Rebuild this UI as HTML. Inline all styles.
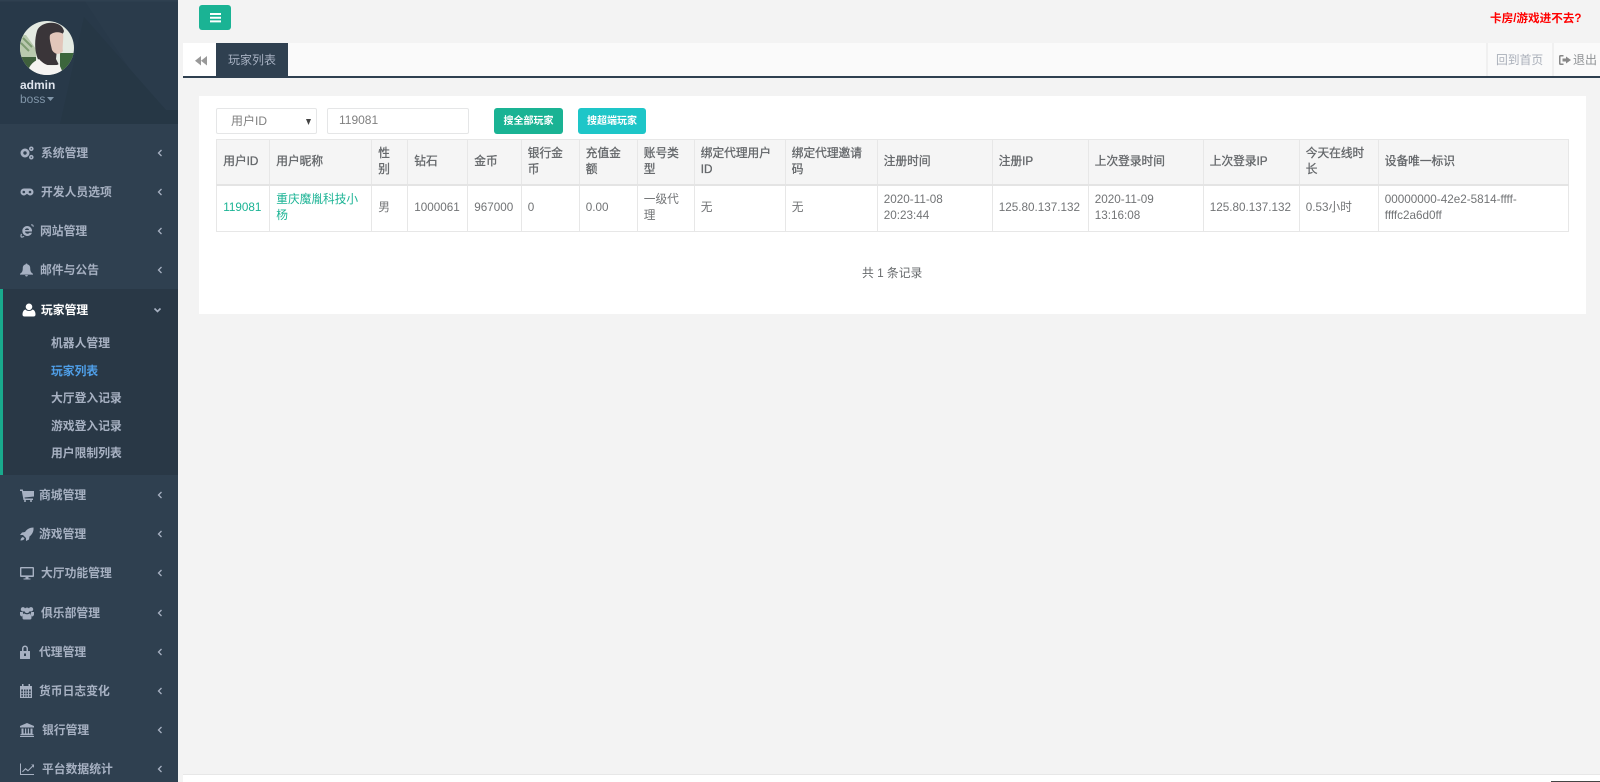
<!DOCTYPE html>
<html lang="zh"><head><meta charset="utf-8"><title>玩家列表</title>
<style>
*{box-sizing:border-box}
html,body{margin:0;padding:0;width:1600px;height:782px;overflow:hidden;background:#f3f3f3;font-family:"Liberation Sans","Noto Sans CJK SC",sans-serif;font-size:12px;color:#676a6c}
.a{position:absolute;white-space:nowrap}
#side{position:absolute;left:0;top:0;width:177.500px;height:782px;background:#2f4050;overflow:hidden}
#head{position:absolute;left:0;top:0;width:178px;height:124px;background:#283949}
.m{position:absolute;left:0;width:177px;height:20px;line-height:20px;color:#a7b1c2;font-weight:700;font-size:11.800px}
.m svg.i{position:absolute;left:20px;top:3px;width:14px;height:14px;fill:#a7b1c2}
.m span{position:absolute;top:0;white-space:nowrap}
.m svg.c{position:absolute;left:155px;top:5px;width:9px;height:10px;fill:none;stroke:#a7b1c2;stroke-width:1.300}
.s{position:absolute;left:51px;color:#a7b1c2;font-weight:700;line-height:18px;white-space:nowrap;font-size:11.800px}
table{position:absolute;left:216px;top:138.500px;width:1353px;height:92px;border-collapse:collapse;table-layout:fixed;font-size:11.700px;line-height:16px}
td,th{border:1px solid #e7e7e7;padding:0 0 0 6.300px;text-align:left;vertical-align:middle;white-space:nowrap;overflow:visible}
th{background:#f5f5f5;font-weight:400;color:#64676a;border-bottom:2px solid #e4e4e4;height:46px;-webkit-text-stroke:.3px #64676a}
td{height:46px;color:#727476}
td.g{color:#1ab394}
</style></head><body>
<div id="side">
<div id="head">
<svg width="178" height="124" style="position:absolute;left:0;top:0"><path d="M84 0H178V124H166Z" fill="#2a3b4b"/><path d="M84 17L166 110H178V124H60Z" fill="#263745"/><path d="M0 0H178V1.500H0Z" fill="#2f4050"/></svg>
<svg width="54" height="54" viewBox="0 0 54 54" style="position:absolute;left:20px;top:21px"><defs><clipPath id="av"><circle cx="27" cy="27" r="27"/></clipPath></defs><g clip-path="url(#av)"><rect width="54" height="54" fill="#e4eae2"/><path d="M0 14L6 14L16 28V36H0Z" fill="#b9c9ae"/><path d="M3 17L12 26M1 22L9 30" stroke="#7e9c72" stroke-width="2"/><path d="M40 32H54V50H40Z" fill="#3c663c"/><path d="M0 36H16V54H0Z" fill="#3f5f3c"/><path d="M17 10C20 0 41-2 44 10C43 14 40 14 38 18L36 38L39 44L22 44C14 36 14 20 17 10Z" fill="#3a3539"/><path d="M30 14C34 10 41 11 43 13C44 16 42 26 43 30C40 34 35 34 32 29C31 24 29 18 30 14Z" fill="#e2c6ba"/><path d="M7 54C8 46 12 41 19 38C24 44 32 47 39 43L44 54Z" fill="#f5f3f1"/></g></svg>
<div class="a" style="left:20px;top:77px;color:#dfe4ed;font-weight:700;font-size:12px;line-height:16px">admin</div>
<div class="a" style="left:20px;top:91px;color:#8095a8;font-size:12px;line-height:16px">boss</div>
<svg class="a" style="left:47px;top:97px" width="7" height="4"><path d="M0 0H7L3.500 4Z" fill="#8095a8"/></svg>
</div>
<div style="position:absolute;left:0;top:289px;width:178px;height:186px;background:#293846"></div>
<div style="position:absolute;left:0;top:289px;width:3px;height:186px;background:#19aa8d"></div>

<div class="m" style="top:143px"><svg class="i" viewBox="0 0 14 14"><path fill-rule="evenodd" d="M5 2.500a4.500 4.500 0 1 1 0 9a4.500 4.500 0 0 1 0-9ZM5 5.300a1.700 1.700 0 1 0 0 3.400a1.700 1.700 0 0 0 0-3.400Z"/><path fill-rule="evenodd" d="M11.300 .5a2.300 2.300 0 1 1 0 4.600a2.300 2.300 0 0 1 0-4.600ZM11.300 2.100a.7.7 0 1 0 0 1.400a.7.7 0 0 0 0-1.400ZM11.300 8.900a2.300 2.300 0 1 1 0 4.600a2.300 2.300 0 0 1 0-4.600ZM11.300 10.500a.7.7 0 1 0 0 1.400a.7.7 0 0 0 0-1.400Z"/></svg><span style="left:41px">系统管理</span><svg class="c" viewBox="0 0 9 10"><path d="M6.500 2L3.500 5L6.500 8"/></svg></div>
<div class="m" style="top:182px"><svg class="i" viewBox="0 0 14 14"><path fill-rule="evenodd" d="M4 3.500H10A3.500 3.500 0 0 1 10 10.500C8.500 10.500 8 9 7 9S5.500 10.500 4 10.500A3.500 3.500 0 0 1 4 3.500ZM3.800 5.700a1.300 1.300 0 1 0 0 2.600a1.300 1.300 0 0 0 0-2.600ZM10 5.700a1.300 1.300 0 1 0 0 2.600a1.300 1.300 0 0 0 0-2.600Z"/></svg><span style="left:41px">开发人员选项</span><svg class="c" viewBox="0 0 9 10"><path d="M6.500 2L3.500 5L6.500 8"/></svg></div>
<div class="m" style="top:221px"><svg class="i" viewBox="0 0 14 14"><path fill-rule="evenodd" d="M7 2A5 5 0 0 1 12 7.500H5C5.200 10 8.500 10.300 9.500 8.700H12A5 5 0 1 1 7 2ZM5 6H9C9 3.800 5.200 3.800 5 6Z"/><path d="M11 .5C13 0 14 1 13.500 3L12.500 2.500C12.800 1.500 12 1.200 11 1.500ZM1 9.500L2 10.500C1 12.500 1.500 13 3.500 12L4.500 12.800C1 14.800-.5 13.200 1 9.500Z"/></svg><span style="left:40px">网站管理</span><svg class="c" viewBox="0 0 9 10"><path d="M6.500 2L3.500 5L6.500 8"/></svg></div>
<div class="m" style="top:260px"><svg class="i" style="width:13px" viewBox="0 0 14 14"><path d="M7 0C7.600 0 8 .4 8 1C10 1.400 11 3 11 5C11 8.500 12 10 14 11V12H0V11C2 10 3 8.500 3 5C3 3 4 1.400 6 1C6 .4 6.400 0 7 0ZM5.500 12.500H8.500C8.500 13.300 7.800 14 7 14S5.500 13.300 5.500 12.500Z"/></svg><span style="left:40px">邮件与公告</span><svg class="c" viewBox="0 0 9 10"><path d="M6.500 2L3.500 5L6.500 8"/></svg></div>
<div class="m" style="top:300px;color:#fff"><svg class="i" style="left:22px;fill:#fff" viewBox="0 0 14 14"><path d="M7 .5A3.300 3.300 0 1 1 7 7.100A3.300 3.300 0 0 1 7 .5ZM3.500 6.500C5 8.500 9 8.500 10.500 6.500C12.500 7 13.500 9 13.500 11.500C13.500 13 12.500 13.500 11.500 13.500H2.500C1.500 13.500 .5 13 .5 11.500C.5 9 1.500 7 3.500 6.500Z"/></svg><span style="left:41px">玩家管理</span><svg class="c" style="left:153px;stroke-width:1.600" viewBox="0 0 9 10"><path d="M1.500 3.500L4.500 6.500L7.500 3.500"/></svg></div>
<div class="s" style="top:334px">机器人管理</div>
<div class="s" style="top:362px;color:#4f9fe8">玩家列表</div>
<div class="s" style="top:389px">大厅登入记录</div>
<div class="s" style="top:417px">游戏登入记录</div>
<div class="s" style="top:444px">用户限制列表</div>

<div class="m" style="top:485px"><svg class="i" viewBox="0 0 14 14"><path d="M0 1.500H2.800L3.200 3H14V8.500L4.500 9.500L4.800 10.500H13V12H3.500L1.800 3H0Z"/><circle cx="5" cy="13" r="1"/><circle cx="11" cy="13" r="1"/></svg><span style="left:39px">商城管理</span><svg class="c" viewBox="0 0 9 10"><path d="M6.500 2L3.500 5L6.500 8"/></svg></div>
<div class="m" style="top:524px"><svg class="i" viewBox="0 0 14 14"><path d="M13.500 .5C14 5 11.500 8 9.500 9.500L9 12.500L6 14V11L3 8H0L2 5.500L5 5C7 2 10 .5 13.500 .5Z"/><path d="M3 10L4.500 11.500C4 13 2 13.500 .5 13.500C.5 12 1.500 10.500 3 10Z"/></svg><span style="left:39px">游戏管理</span><svg class="c" viewBox="0 0 9 10"><path d="M6.500 2L3.500 5L6.500 8"/></svg></div>
<div class="m" style="top:563px"><svg class="i" viewBox="0 0 14 14"><path fill-rule="evenodd" d="M1 1H13A1 1 0 0 1 14 2V10A1 1 0 0 1 13 11H8.500V12.500H10.500V13.500H3.500V12.500H5.500V11H1A1 1 0 0 1 0 10V2A1 1 0 0 1 1 1ZM1.400 2.400V9.400H12.600V2.400Z"/></svg><span style="left:41px">大厅功能管理</span><svg class="c" viewBox="0 0 9 10"><path d="M6.500 2L3.500 5L6.500 8"/></svg></div>
<div class="m" style="top:603px"><svg class="i" viewBox="0 0 14 14"><circle cx="3" cy="3.300" r="2.200"/><circle cx="11" cy="3.300" r="2.200"/><circle cx="7" cy="4.300" r="2.800"/><path d="M0 6H2.800C3 7.500 3.500 8 4 8.500C3 9 2.500 9.500 2.300 10.500C1 10.500 0 9.500 0 8.500ZM14 6H11.200C11 7.500 10.500 8 10 8.500C11 9 11.500 9.500 11.700 10.500C13 10.500 14 9.500 14 8.500ZM4.500 7.500C6 8.500 8 8.500 9.500 7.500C11 8 11.500 10 11.500 11.700C11.500 12.800 11 13.500 10 13.500H4C3 13.500 2.500 12.800 2.500 11.700C2.500 10 3 8 4.500 7.500Z"/></svg><span style="left:41px">俱乐部管理</span><svg class="c" viewBox="0 0 9 10"><path d="M6.500 2L3.500 5L6.500 8"/></svg></div>
<div class="m" style="top:642px"><svg class="i" style="width:10px" viewBox="0 0 10 14"><path fill-rule="evenodd" d="M2 6V3.500A3 3 0 0 1 8 3.500V6H9.500C10 6 10 6.300 10 7V13C10 13.700 10 14 9.500 14H.5C0 14 0 13.700 0 13V7C0 6.300 0 6 .5 6ZM3.500 6H6.500V3.500A1.500 1.500 0 0 0 3.500 3.500ZM4 8.500V11H6V8.500Z"/></svg><span style="left:39px">代理管理</span><svg class="c" viewBox="0 0 9 10"><path d="M6.500 2L3.500 5L6.500 8"/></svg></div>
<div class="m" style="top:681px"><svg class="i" style="width:12px;left:20px" viewBox="1 0 12 14"><path fill-rule="evenodd" d="M3 0H4.500V2H9.500V0H11V2H13V14H1V2H3ZM2.200 5.500V7.500H4V5.500ZM5 5.500V7.500H6.500V5.500ZM7.500 5.500V7.500H9V5.500ZM10 5.500V7.500H11.800V5.500ZM2.200 8.500V10.200H4V8.500ZM5 8.500V10.200H6.500V8.500ZM7.500 8.500V10.200H9V8.500ZM10 8.500V10.200H11.800V8.500ZM2.200 11.200V12.800H4V11.200ZM5 11.200V12.800H6.500V11.200ZM7.500 11.200V12.800H9V11.200ZM10 11.200V12.800H11.800V11.200Z"/></svg><span style="left:39px">货币日志变化</span><svg class="c" viewBox="0 0 9 10"><path d="M6.500 2L3.500 5L6.500 8"/></svg></div>
<div class="m" style="top:720px"><svg class="i" viewBox="0 0 14 14"><path fill-rule="evenodd" d="M7 0L14 3V4.500H0V3ZM1.500 5.500H3.500V10.500H5V5.500H6.200V10.500H7.800V5.500H9V10.500H10.500V5.500H12.500V11H13.500V12.300H.5V11H1.500ZM0 13H14V14H0Z"/></svg><span style="left:42px">银行管理</span><svg class="c" viewBox="0 0 9 10"><path d="M6.500 2L3.500 5L6.500 8"/></svg></div>
<div class="m" style="top:759px"><svg class="i" viewBox="0 0 14 14"><path d="M0 1.500H1V12H14V13H0Z"/><path d="M2 9.500L5.500 6L8 8L12.500 3.500L11 2.500H14V6L13 4.500L8 9.500L5.500 7.500L2.800 10.300Z"/></svg><span style="left:42px">平台数据统计</span><svg class="c" viewBox="0 0 9 10"><path d="M6.500 2L3.500 5L6.500 8"/></svg></div>
</div>

<div class="a" style="left:199px;top:5px;width:32px;height:25px;background:#1ab394;border-radius:3px"></div>
<svg class="a" style="left:210px;top:13px" width="11" height="10"><path d="M0 0H11V2H0ZM0 3.700H11V5.700H0ZM0 7.400H11V9.400H0Z" fill="#fff"/></svg>
<div class="a" style="left:1490px;top:10px;color:#f00;font-weight:700;line-height:18px;font-size:11.600px">卡房/游戏进不去?</div>

<div class="a" style="left:183px;top:43px;width:1417px;height:34px;background:#fafafa"></div>
<div class="a" style="left:183px;top:43px;width:33px;height:34px;background:#fff"></div>
<svg class="a" style="left:194.500px;top:55.500px" width="12" height="10"><path d="M6 0V9.500L0 4.750ZM12 0V9.500L6 4.750Z" fill="#999"/></svg>
<div class="a" style="left:216px;top:43px;width:72px;height:34px;background:#2f4050;color:#a7b1c2;line-height:34px;text-align:center">玩家列表</div>
<div class="a" style="left:1486px;top:43px;width:2px;height:34px;background:#f0f0f0"></div>
<div class="a" style="left:1552px;top:43px;width:2px;height:34px;background:#f0f0f0"></div>
<div class="a" style="left:1496px;top:51px;color:#a9afb9;line-height:18px;font-size:11.800px">回到首页</div>
<svg class="a" style="left:1559px;top:55px" width="12" height="10"><path d="M4.500 0V1.500H2C1.700 1.500 1.500 1.700 1.500 2V8C1.500 8.300 1.700 8.500 2 8.500H4.500V10H1.500C.6 10 0 9.400 0 8.500V1.500C0 .6 .6 0 1.500 0ZM7 1.500L12 5L7 8.500V6.500H3.500V3.500H7Z" fill="#888"/></svg>
<div class="a" style="left:1573px;top:51px;color:#8f9295;line-height:18px">退出</div>
<div class="a" style="left:183px;top:76px;width:1417px;height:2px;background:#2f4050"></div>

<div class="a" style="left:199px;top:96px;width:1387px;height:218px;background:#fff"></div>
<div class="a" style="left:216px;top:108px;width:101px;height:26px;border:1px solid #e5e6e7;background:#fff;border-radius:2px;line-height:25px;padding-left:14px;color:#808080">用户ID</div>
<svg class="a" style="left:306px;top:119px" width="5" height="6"><path d="M0 0H5L2.500 6Z" fill="#444"/></svg>
<div class="a" style="left:327px;top:108px;width:142px;height:26px;border:1px solid #e5e6e7;background:#fff;border-radius:2px;line-height:23px;padding-left:11px;color:#808080;font-size:12px">119081</div>
<div class="a" style="left:494px;top:108px;width:69px;height:26px;background:#1ab394;border-radius:3px;color:#fff;line-height:27px;text-align:center;font-size:10px;font-weight:700">搜全部玩家</div>
<div class="a" style="left:578px;top:108px;width:68px;height:26px;background:#1ec6c8;border-radius:3px;color:#fff;line-height:27px;text-align:center;font-size:10px;font-weight:700">搜超端玩家</div>

<table>
<colgroup><col style="width:53px"><col style="width:102px"><col style="width:36px"><col style="width:60px"><col style="width:53.500px"><col style="width:58px"><col style="width:58px"><col style="width:57px"><col style="width:91px"><col style="width:92px"><col style="width:115px"><col style="width:96px"><col style="width:115px"><col style="width:96px"><col style="width:79px"><col></colgroup>
<tr><th>用户ID</th><th>用户昵称</th><th>性<br>别</th><th>钻石</th><th>金币</th><th>银行金<br>币</th><th>充值金<br>额</th><th>账号类<br>型</th><th>绑定代理用户<br>ID</th><th>绑定代理邀请<br>码</th><th>注册时间</th><th>注册IP</th><th>上次登录时间</th><th>上次登录IP</th><th>今天在线时<br>长</th><th>设备唯一标识</th></tr>
<tr><td class="g">119081</td><td class="g">重庆魔胤科技小<br>杨</td><td>男</td><td>1000061</td><td>967000</td><td>0</td><td>0.00</td><td>一级代<br>理</td><td>无</td><td>无</td><td>2020-11-08<br>20:23:44</td><td>125.80.137.132</td><td>2020-11-09<br>13:16:08</td><td>125.80.137.132</td><td>0.53小时</td><td>00000000-42e2-5814-ffff-<br>ffffc2a6d0ff</td></tr>
</table>
<div class="a" style="left:862px;top:264px;line-height:18px;font-size:11.800px">共 1 条记录</div>

<div class="a" style="left:183px;top:774px;width:1417px;height:8px;background:#fff;border-top:1px solid #e7e7e7"></div>
<div class="a" style="left:1551px;top:781px;width:49px;height:1px;background:#444"></div>
</body></html>
